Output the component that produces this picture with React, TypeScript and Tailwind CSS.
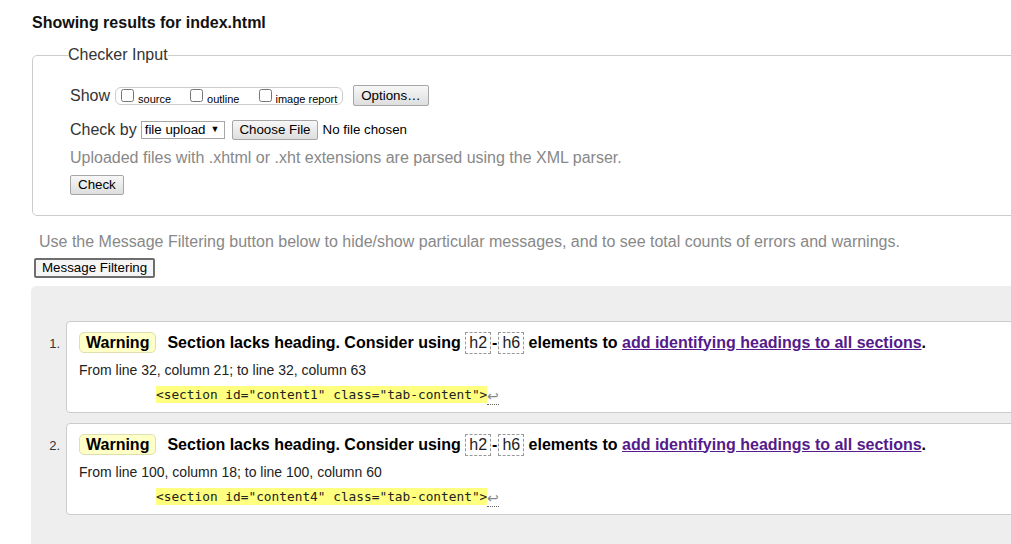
const btn =
  "inline-flex items-center h-[20px] px-[6px] text-[13.33px] text-black border border-[#a6a6a6] rounded-[2px] bg-gradient-to-b from-[#f7f7f7] to-[#dedede]"

function Tag({ name }: { name: string }) {
  return (
    <span className="inline-block border border-dashed border-[#999] px-[3px] leading-[20px] font-normal text-[#222]">
      {name}
    </span>
  )
}

function Message({ n, from, code }: { n: number; from: string; code: string }) {
  return (
    <div className="flex">
      <div className="w-[35px] shrink-0 pr-[6px] pt-[13px] text-right text-[13px] text-[#333]">{n}.</div>
      <div className="flex-1 bg-white border border-[#ccc] rounded-[4px] pl-[12px] pt-[9px] pb-[8px]">
        <div className="flex items-center h-[23px] text-[16px] font-bold text-black whitespace-pre">
          <span className="leading-[19px] px-[6px] bg-[#ffffc8] border border-[#dedeae] rounded-[5px]">Warning</span>
          <span className="ml-[11px]">Section lacks heading. Consider using </span>
          <Tag name="h2" />
          <span className="mx-[1px]">-</span>
          <Tag name="h6" />
          <span> elements to </span>
          <a className="text-[#551a8b] underline">add identifying headings to all sections</a>
          <span>.</span>
        </div>
        <div className="mt-[6px] h-[20px] leading-[20px] text-[14px] text-[#222]">{from}</div>
        <div className="mt-[5px] h-[19px] flex items-center pl-[77px]">
          <code className="font-['DejaVu_Sans_Mono',monospace] text-[12.8px] leading-[17px] bg-[#ffff80] text-[#222]">
            {code}
          </code>
          <span className="text-[14px] leading-[15px] text-[#888] border-b border-dotted border-[#666] mt-[4px]">↩</span>
        </div>
      </div>
    </div>
  )
}

export default function App() {
  return (
    <div className="min-h-[544px] overflow-hidden bg-white pl-[32px] font-['Liberation_Sans',Arial,sans-serif] text-[#222]">
      <p className="-mt-[19px] leading-[20px] text-[16px] text-[#888] whitespace-nowrap">
        This tool is an ongoing experiment in better HTML checking, and its behavior remains subject to change
      </p>
      <h2 className="mt-[12px] leading-[20px] text-[16px] font-bold text-[#111]">Showing results for index.html</h2>

      <fieldset className="mt-[12px] w-[1060px] border border-[#ccc] rounded-[5px] pl-[37px] pt-[20px] pb-[19px]">
        <legend className="-ml-[2px] leading-[20px] text-[16px] text-[#333]">Checker Input</legend>

        <div className="flex items-center h-[21px]">
          <span className="text-[16px] text-[#333]">Show</span>
          <span className="ml-[5px] flex items-start h-[18px] border border-[#ccc] rounded-[6px] pl-[5px] pr-[5px] text-[11px] text-black">
            <label className="flex items-start">
              <input type="checkbox" className="w-[13px] h-[13px] mt-[1px]" />
              <span className="ml-[4px] mt-[3px]">source</span>
            </label>
            <label className="flex items-start ml-[19px]">
              <input type="checkbox" className="w-[13px] h-[13px] mt-[1px]" />
              <span className="ml-[4px] mt-[3px]">outline</span>
            </label>
            <label className="flex items-start ml-[20px]">
              <input type="checkbox" className="w-[13px] h-[13px] mt-[1px]" />
              <span className="ml-[3px] mt-[3px]">image report</span>
            </label>
          </span>
          <button className={btn + " ml-[10px] h-[21px] px-[7px]"}>Options…</button>
        </div>

        <div className="mt-[14px] flex items-center h-[20px]">
          <span className="text-[16px] text-[#333]">Check by</span>
          <span className="ml-[4px] flex items-center h-[18px] border border-[#a6a6a6] bg-white pl-[3px] pr-[5px] text-[13.33px] text-black">
            file upload<span className="ml-[5px] text-[9px]">▼</span>
          </span>
          <button className={btn + " ml-[7px] px-[6px]"}>Choose File</button>
          <span className="ml-[5px] text-[13.33px] text-black">No file chosen</span>
        </div>

        <p className="mt-[8px] leading-[20px] text-[16px] text-[#888]">
          Uploaded files with .xhtml or .xht extensions are parsed using the XML parser.
        </p>

        <button className={btn + " mt-[7px] px-[7px]"}>Check</button>
      </fieldset>

      <p className="mt-[16px] ml-[7px] leading-[20px] text-[16px] text-[#888]">
        Use the Message Filtering button below to hide/show particular messages, and to see total counts of errors and warnings.
      </p>
      <button className="mt-[6px] ml-[2px] h-[20px] px-[6px] text-[13.33px] text-black bg-[#f5f5f5] border-2 border-[#6e6e6e] rounded-[2px] flex items-center">
        Message Filtering
      </button>

      <div className="mt-[8px] -ml-px w-[1100px] min-h-[300px] bg-[#eeeeee] rounded-tl-[5px] pt-[35px] flex flex-col gap-[10px]">
        <Message n={1} from="From line 32, column 21; to line 32, column 63" code={'<section id="content1" class="tab-content">'} />
        <Message n={2} from="From line 100, column 18; to line 100, column 60" code={'<section id="content4" class="tab-content">'} />
      </div>
    </div>
  )
}
